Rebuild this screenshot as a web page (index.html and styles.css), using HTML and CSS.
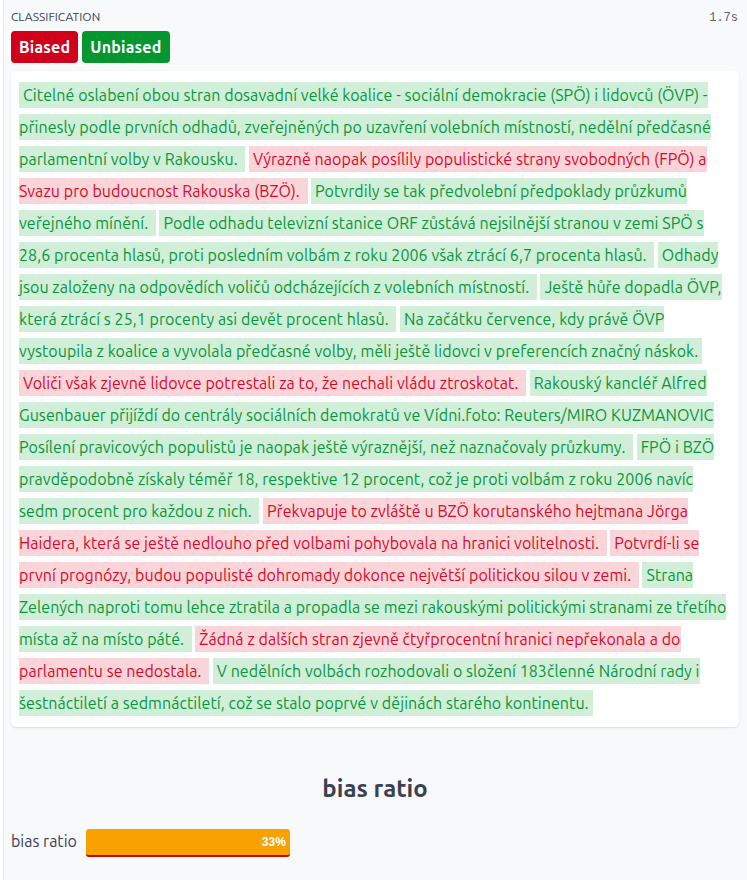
FILE: index.html
```html
<!DOCTYPE html>
<html lang="cs">
<head>
<meta charset="utf-8">
<title>Classification</title>
<link rel="stylesheet" href="styles.css">
</head>
<body>
<div class="wrap">
  <section class="classification">
    <div class="head">
      <span class="head-label">CLASSIFICATION</span>
      <span class="head-time">1.7s</span>
    </div>
    <div class="badges">
      <span class="badge badge-biased">Biased</span>
      <span class="badge badge-unbiased">Unbiased</span>
    </div>
    <div class="card">
      <p class="text"><span class="seg seg-g">Citelné oslabení obou stran dosavadní velké koalice - sociální demokracie (SPÖ) i lidovců (ÖVP) - přinesly podle prvních odhadů, zveřejněných po uzavření volebních místností, nedělní předčasné parlamentní volby v Rakousku. </span><span class="seg seg-r">Výrazně naopak posílily populistické strany svobodných (FPÖ) a Svazu pro budoucnost Rakouska (BZÖ). </span><span class="seg seg-g">Potvrdily se tak předvolební předpoklady průzkumů veřejného mínění. </span><span class="seg seg-g">Podle odhadu televizní stanice ORF zůstává nejsilnější stranou v zemi SPÖ s 28,6 procenta hlasů, proti posledním volbám z roku 2006 však ztrácí 6,7 procenta hlasů. </span><span class="seg seg-g">Odhady jsou založeny na odpovědích voličů odcházejících z volebních místností. </span><span class="seg seg-g">Ještě hůře dopadla ÖVP, která ztrácí s 25,1 procenty asi devět procent hlasů. </span><span class="seg seg-g">Na začátku července, kdy právě ÖVP vystoupila z koalice a vyvolala předčasné volby, měli ještě lidovci v preferencích značný náskok. </span><span class="seg seg-r">Voliči však zjevně lidovce potrestali za to, že nechali vládu ztroskotat. </span><span class="seg seg-g">Rakouský kancléř Alfred Gusenbauer přijíždí do centrály sociálních demokratů ve Vídni.foto: Reuters/MIRO KUZMANOVIC Posílení pravicových populistů je naopak ještě výraznější, než naznačovaly průzkumy. </span><span class="seg seg-g">FPÖ i BZÖ pravděpodobně získaly téměř 18, respektive 12 procent, což je proti volbám z roku 2006 navíc sedm procent pro každou z nich. </span><span class="seg seg-r">Překvapuje to zvláště u BZÖ korutanského hejtmana Jörga Haidera, která se ještě nedlouho před volbami pohybovala na hranici volitelnosti. </span><span class="seg seg-r">Potvrdí-li se první prognózy, budou populisté dohromady dokonce největší politickou silou v zemi. </span><span class="seg seg-g">Strana Zelených naproti tomu lehce ztratila a propadla se mezi rakouskými politickými stranami ze třetího místa až na místo páté. </span><span class="seg seg-r">Žádná z dalších stran zjevně čtyřprocentní hranici nepřekonala a do parlamentu se nedostala. </span><span class="seg seg-g">V nedělních volbách rozhodovali o složení 183členné Národní rady i šestnáctiletí a sedmnáctiletí, což se stalo poprvé v dějinách starého kontinentu. </span></p>
    </div>
  </section>
  <section class="ratio">
    <h2 class="ratio-title">bias ratio</h2>
    <div class="bar-row">
      <span class="bar-label">bias ratio</span>
      <div class="bar-track">
        <div class="bar-fill" style="width:33%">33%</div>
      </div>
    </div>
  </section>
</div>
</body>
</html>
```
FILE: styles.css
```css
html, body {
  margin: 0;
  padding: 0;
  background: #ffffff;
}

body {
  font-family: "Ubuntu", "Noto Sans", "Open Sans", sans-serif;
  color: #374151;
}

.wrap {
  margin-left: 3px;
  border-left: 1px solid #e8eaee;
  background: #f8f9fb;
  padding: 10px 8px 0 7px;
  min-height: 100vh;
  box-sizing: border-box;
}

.head {
  display: flex;
  justify-content: space-between;
  align-items: baseline;
  height: 13px;
}

.head-label {
  font-size: 12px;
  color: #3b4252;
}

.head-time {
  font-family: "Liberation Mono", "DejaVu Sans Mono", monospace;
  font-size: 12px;
  color: #5b6270;
  padding-right: 1px;
}

.badges {
  display: flex;
  gap: 4px;
  margin-top: 8px;
}

.badge {
  display: inline-block;
  color: #ffffff;
  font-weight: 700;
  font-size: 16px;
  line-height: 18px;
  padding: 7px 8px;
  border-radius: 4px;
  letter-spacing: 0.2px;
}

.badge-biased {
  background: #d0021b;
}

.badge-unbiased {
  background: #05962f;
}

.card {
  margin-top: 8px;
  background: #ffffff;
  border-radius: 5px;
  box-shadow: 0 1px 2px rgba(0, 0, 0, 0.12);
  padding: 8px;
}

.text {
  margin: 0;
  font-size: 16px;
  line-height: 32px;
  letter-spacing: 0.065px;
}

.seg {
  padding: 4px;
  margin-right: 3.5px;
}

.seg-g {
  background: #d1eed9;
  color: #07973a;
}

.seg-r {
  background: #f9d4d8;
  color: #d6092c;
}

.ratio {
  padding-top: 48px;
}

.ratio-title {
  margin: 0;
  text-align: center;
  font-size: 24px;
  font-weight: 700;
  line-height: 27.6px;
  color: #3a4152;
}

.bar-row {
  display: flex;
  align-items: center;
  gap: 9px;
  margin-top: 26px;
}

.bar-label {
  font-size: 16px;
  color: #3a4152;
  margin-bottom: 4px;
}

.bar-track {
  width: 618px;
}

.bar-fill {
  box-sizing: border-box;
  height: 28px;
  background: #f8a100;
  border-bottom: 2px solid #cf0000;
  border-radius: 3px;
  color: #ffffff;
  font-family: "Liberation Sans", Arial, sans-serif;
  font-weight: 700;
  font-size: 12px;
  line-height: 26px;
  text-align: right;
  padding-right: 4px;
}
```
